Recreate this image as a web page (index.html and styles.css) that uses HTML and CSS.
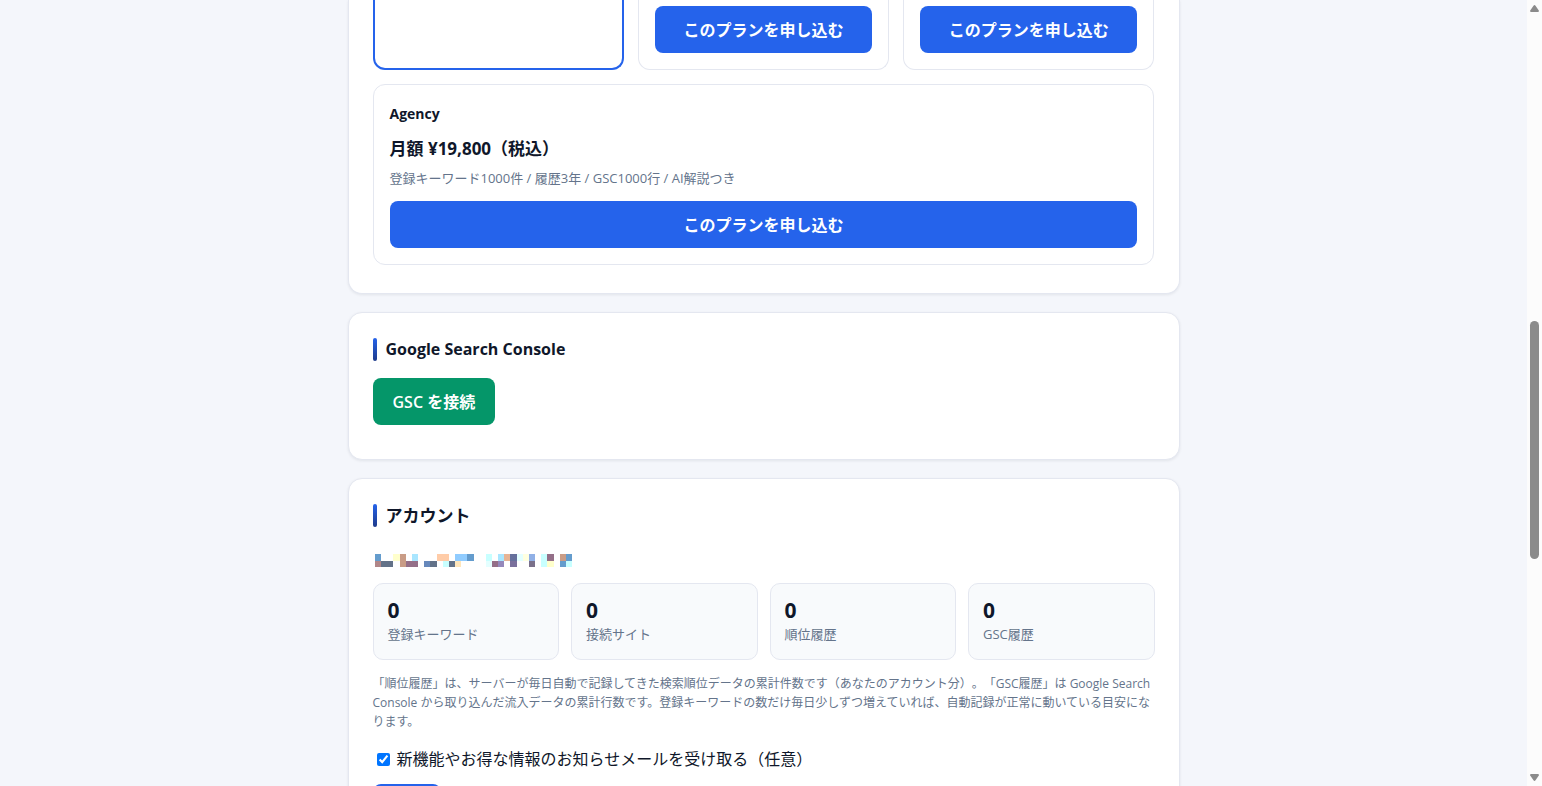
FILE: index.html
```html
<!DOCTYPE html>
<html lang="ja">
<head>
<meta charset="utf-8">
<meta name="viewport" content="width=device-width, initial-scale=1">
<title>アカウント</title>
<link rel="stylesheet" href="styles.css">
</head>
<body>
<main class="page">
  <section class="panel panel-plans">
    <div class="plans">
      <article class="plan plan-current"></article>
      <article class="plan"><button class="btn btn-block" type="button">このプランを申し込む</button></article>
      <article class="plan"><button class="btn btn-block" type="button">このプランを申し込む</button></article>
      <article class="plan plan-wide">
        <h3 class="plan-name">Agency</h3>
        <p class="plan-price">月額 ¥19,800（税込）</p>
        <p class="plan-desc">登録キーワード1000件 / 履歴3年 / GSC1000行 / AI解説つき</p>
        <button class="btn btn-block" type="button">このプランを申し込む</button>
      </article>
    </div>
  </section>

  <section class="panel panel-gsc">
    <h2 class="title title-latin">Google Search Console</h2>
    <button class="btn btn-green" type="button">GSC を接続</button>
  </section>

  <section class="panel">
    <h2 class="title">アカウント</h2>
    <svg class="masked" viewBox="0 0 32 2" preserveAspectRatio="none" shape-rendering="crispEdges" aria-hidden="true">
      <path fill="#649ccd" d="M0 0h1v1H0zM15 0h1v1h-1zM31 0h1v1h-1zM30 1h1v1h-1z"/>
      <path fill="#ffffcc" d="M3 0h1v1H3zM28 1h1v1h-1z"/>
      <path fill="#c99c86" d="M4 0h1v2H4zM30 0h1v1h-1z"/>
      <path fill="#a9e6ff" d="M6 0h1v1H6zM20 0h1v1h-1z"/>
      <path fill="#ffcca8" d="M10 0h2v1h-2z"/>
      <path fill="#90ccff" d="M13 0h2v1h-2z"/>
      <path fill="#c8ffff" d="M18 0h1v1h-1zM27 0h1v2h-1zM11 1h1v1h-1zM31 1h1v1h-1z"/>
      <path fill="#e6b394" d="M21 0h1v1h-1z"/>
      <path fill="#66709c" d="M22 0h1v1h-1z"/>
      <path fill="#e4ffff" d="M23 0h1v1h-1zM18 1h1v1h-1z"/>
      <path fill="#ffffe0" d="M24 0h1v1h-1z"/>
      <path fill="#90b0e6" d="M25 0h1v1h-1z"/>
      <path fill="#946f88" d="M28 0h1v1h-1zM5 1h2v1H5zM19 1h1v1h-1z"/>
      <path fill="#b08688" d="M0 1h1v1H0z"/>
      <path fill="#637288" d="M1 1h2v1H1zM9 1h1v1H9zM12 1h1v1h-1z"/>
      <path fill="#6688bb" d="M8 1h1v1H8z"/>
      <path fill="#ffe6bb" d="M13 1h1v1h-1z"/>
      <path fill="#9488bb" d="M20 1h1v1h-1z"/>
      <path fill="#7a709c" d="M22 1h1v1h-1z"/>
      <path fill="#7a708a" d="M25 1h1v1h-1z"/>
    </svg>
    <dl class="stats">
      <div class="stat"><dt>登録キーワード</dt><dd>0</dd></div>
      <div class="stat"><dt>接続サイト</dt><dd>0</dd></div>
      <div class="stat"><dt>順位履歴</dt><dd>0</dd></div>
      <div class="stat"><dt>GSC履歴</dt><dd>0</dd></div>
    </dl>
    <p class="note">「順位履歴」は、サーバーが毎日自動で記録してきた検索順位データの累計件数です（あなたのアカウント分）。「GSC履歴」は Google Search Console から取り込んだ流入データの累計行数です。登録キーワードの数だけ毎日少しずつ増えていれば、自動記録が正常に動いている目安になります。</p>
    <label class="check"><input type="checkbox" checked>新機能やお得な情報のお知らせメールを受け取る（任意）</label>
    <button class="btn btn-save" type="button" aria-label="保存"></button>
  </section>
</main>
<div class="scrollbar" aria-hidden="true">
  <svg class="arrow" viewBox="0 0 9 7"><path d="M3.5.7Q4.5-.6 5.5.7L8.8 5.4Q9.2 7 8 7H1Q-.2 7 .2 5.4Z"/></svg>
  <div class="track"><div class="thumb"></div></div>
  <svg class="arrow" viewBox="0 0 9 7"><path d="M3.5 6.3Q4.5 7.6 5.5 6.3L8.8 1.6Q9.2 0 8 0H1Q-.2 0 .2 1.6Z"/></svg>
</div>
</body>
</html>
```

FILE: styles.css
```css
* {
  box-sizing: border-box;
}

body {
  display: flex;
  height: 100vh;
  margin: 0;
  overflow: hidden;
  background: #f4f6fb;
  color: #0f172a;
  font-family: "Open Sans", "Noto Sans CJK JP", sans-serif;
  font-size: 16px;
  line-height: 24px;
  text-spacing-trim: space-all;
}

h2, h3, p, dl, dd {
  margin: 0;
}

.page {
  flex: 1;
  min-width: 0;
  padding: 0 24px;
  overflow: hidden;
}

.panel {
  max-width: 832px;
  margin: 0 auto 18px;
  padding: 25px 24px 34px;
  border: 1px solid #e4e7f0;
  border-radius: 14px;
  background: #fff;
  box-shadow: 0 1px 3px rgba(15, 23, 42, 0.08);
}

.panel-plans {
  padding-top: 0;
  padding-bottom: 28px;
  border-top: 0;
  border-radius: 0 0 14px 14px;
}

.plans {
  display: grid;
  grid-template-columns: repeat(3, 1fr);
  gap: 14px;
}

.plan {
  padding: 6px 16px 16px;
  border: 1px solid #e4e7f0;
  border-top: 0;
  border-radius: 0 0 12px 12px;
}

.plan-current {
  border: 2px solid #2563eb;
  border-top: 0;
}

.plan-wide {
  grid-column: 1 / -1;
  padding-top: 16px;
  border-top: 1px solid #e4e7f0;
  border-radius: 12px;
}

.plan-name {
  margin-bottom: 9px;
  font-size: 14px;
  font-weight: 700;
  line-height: 26px;
}

.plan-price {
  margin-bottom: 6px;
  font-size: 17px;
  font-weight: 700;
  line-height: 26px;
}

.plan-desc {
  margin-bottom: 13px;
  color: #64748b;
  font-size: 13px;
  line-height: 20px;
}

.btn {
  height: 47px;
  padding: 0 20px;
  border: 0;
  border-radius: 8px;
  background: #2563eb;
  color: #fff;
  font: inherit;
  font-weight: 600;
}

.btn-block {
  display: block;
  width: 100%;
  font-weight: 700;
}

.btn-green {
  background: #059669;
}

.btn-save {
  width: 68px;
}

.title {
  display: flex;
  align-items: center;
  gap: 9px;
  margin-bottom: 17px;
  font-size: 17px;
  font-weight: 600;
  line-height: 23px;
}

.title-latin {
  font-size: 16px;
  font-weight: 700;
}

.title::before {
  content: "";
  align-self: stretch;
  width: 4px;
  border-radius: 2px;
  background: linear-gradient(#2563eb, #1e3a8a);
}

.masked {
  display: block;
  width: 197px;
  height: 13px;
  margin: 27px 2px 16px;
}

.stats {
  display: grid;
  grid-template-columns: repeat(4, 1fr);
  gap: 12px;
}

.stat {
  display: flex;
  flex-direction: column-reverse;
  justify-content: flex-end;
  padding: 12px 14px 14px;
  border: 1px solid #e4e7f0;
  border-radius: 10px;
  background: #f8fafc;
}

.stat dt {
  color: #64748b;
  font-size: 13px;
  line-height: 21px;
}

.stat dd {
  font-size: 21px;
  font-weight: 700;
  line-height: 28px;
}

.note {
  margin: 14px 0 16px;
  color: #64748b;
  font-size: 12px;
  line-height: 19px;
}

.check {
  display: flex;
  align-items: center;
  gap: 7px;
  margin-bottom: 13px;
}

.check input {
  width: 13px;
  height: 13px;
  margin: 0 0 0 4px;
}

.scrollbar {
  display: flex;
  flex-direction: column;
  align-items: center;
  width: 15px;
  padding: 5px 0;
  background: #fcfcfc;
}

.arrow {
  width: 9px;
  height: 7px;
  fill: #8b8b8b;
}

.track {
  display: flex;
  flex: 1;
  flex-direction: column;
}

.track::before {
  content: "";
  flex: 309;
}

.track::after {
  content: "";
  flex: 215;
}

.thumb {
  flex: 238;
  width: 9px;
  border-radius: 5px;
  background: #8b8b8b;
}
```
